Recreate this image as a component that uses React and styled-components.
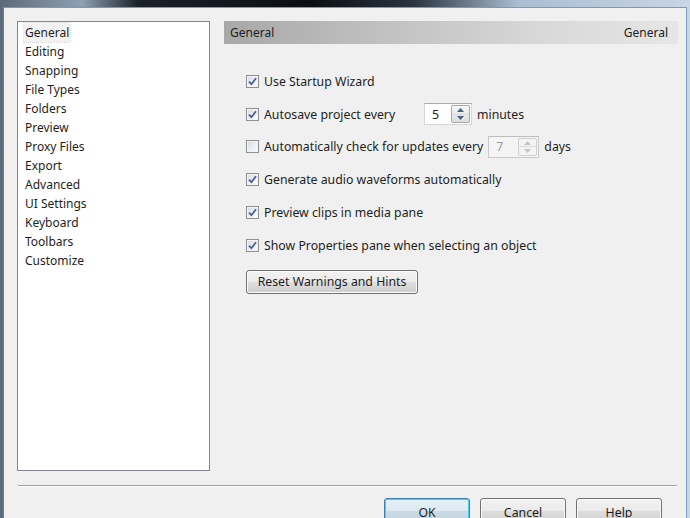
import React from "react";
import styled, { createGlobalStyle, css } from "styled-components";

const GlobalStyle = createGlobalStyle`
  html, body {
    margin: 0;
    padding: 0;
    width: 690px;
    height: 518px;
    overflow: hidden;
  }
  body {
    font-family: "Noto Sans", "Open Sans", sans-serif;
    font-size: 12px;
    color: #1e1e1e;
  }
`;

const Frame = styled.div`
  width: 690px;
  height: 518px;
  display: flex;
  flex-direction: column;
  background: linear-gradient(90deg, #5d6a78 0%, #8da0b4 12%, #1a2129 20%, #0b0f14 45%, #2a3440 60%, #a9bdd2 75%, #c8d6e6 100%);
  overflow: hidden;
`;

const Dialog = styled.div`
  flex: 1;
  margin: 7px 3px 0 3px;
  background: #f0f0f0;
  border-top: 1px solid #8a96a3;
  border-left: 1px solid #6f7d8b;
  border-right: 1px solid #7a9cc0;
  padding: 13px 8px 0 13px;
  display: flex;
  flex-direction: column;
`;

const Body = styled.div`
  display: grid;
  grid-template-columns: 193px 454px;
  column-gap: 14px;
  height: 450px;
`;

const CategoryList = styled.ul`
  margin: 0;
  padding: 1px 0 0 0;
  list-style: none;
  background: #fff;
  border: 1px solid #828790;
`;

const Category = styled.li`
  height: 19px;
  line-height: 19px;
  padding-left: 6px;
  span {
    display: inline-block;
    padding: 0 1px;
    ${(p) =>
      p.$selected &&
      css`
        background: #f2f2f2;
        outline: 1px dotted #d8d8d8;
      `}
  }
`;

const Panel = styled.div`
  display: flex;
  flex-direction: column;
`;

const Header = styled.div`
  height: 23px;
  display: flex;
  align-items: center;
  justify-content: space-between;
  padding: 0 10px 0 6px;
  background: linear-gradient(90deg, #a8a8a8 0%, #bdbdbd 30%, #d8d8d8 70%, #e6e6e6 100%);
  color: #222;
`;

const Options = styled.div`
  display: flex;
  flex-direction: column;
  padding: 21px 0 0 22px;
  font-size: 12.3px;
`;

const Row = styled.div`
  height: 32.8px;
  display: flex;
  align-items: center;
  gap: 5px;
`;

const Box = styled.span`
  width: 13px;
  height: 13px;
  box-sizing: border-box;
  flex: none;
  border: 1px solid #8e8f8f;
  background: linear-gradient(135deg, #d4dbe3 0%, #eef1f5 60%, #ffffff 100%);
  display: flex;
  align-items: center;
  justify-content: center;
  box-shadow: inset 0 0 0 1px #f4f4f4;
`;

const Label = styled.span`
  min-width: ${(p) => p.$min || 0}px;
  color: #1e1e1e;
  white-space: nowrap;
`;

const Spin = styled.div`
  display: flex;
  align-items: stretch;
  width: ${(p) => p.$w}px;
  height: 22px;
  box-sizing: border-box;
  border: 1px solid ${(p) => (p.$disabled ? "#c9c9c9" : "#d6d6d6")};
  border-top-color: ${(p) => (p.$disabled ? "#bdbdbd" : "#abadb3")};
  background: ${(p) => (p.$disabled ? "#f4f4f4" : "#fff")};
`;

const SpinValue = styled.span`
  flex: 1;
  display: flex;
  align-items: center;
  padding-left: 7px;
  color: ${(p) => (p.$disabled ? "#9a9a9a" : "#1e1e1e")};
`;

const SpinButtons = styled.div`
  width: 17px;
  display: flex;
  flex-direction: column;
  margin: 1px;
  border: 1px solid ${(p) => (p.$disabled ? "#cfcfcf" : "#a7a7a7")};
  border-radius: 2px;
  background: ${(p) => (p.$disabled ? "#f4f4f4" : "linear-gradient(#f6f6f6, #dcdcdc)")};
`;

const SpinHalf = styled.div`
  flex: 1;
  display: flex;
  align-items: center;
  justify-content: center;
  & + & {
    border-top: 1px solid ${(p) => (p.$disabled ? "#dadada" : "#b9b9b9")};
  }
`;

const ButtonBase = styled.button`
  font-family: inherit;
  font-size: 12.3px;
  color: #1e1e1e;
  height: 24px;
  box-sizing: border-box;
  border: 1px solid #707070;
  border-radius: 3px;
  padding: 0;
  background: linear-gradient(#f2f2f2 0%, #ebebeb 48%, #dddddd 52%, #cfcfcf 100%);
  box-shadow: inset 0 0 0 1px #fcfcfc;
`;

const ResetButton = styled(ButtonBase)`
  width: 172px;
  margin-top: 8px;
`;

const Separator = styled.div`
  margin: 14px 0 0 1px;
  height: 0;
  border-top: 1px solid #a0a0a0;
  border-bottom: 1px solid #ffffff;
  width: 659px;
`;

const Footer = styled.div`
  display: flex;
  justify-content: flex-end;
  gap: 10px;
  padding: 11px 16px 0 0;
`;

const DialogButton = styled(ButtonBase)`
  width: 86px;
  height: 26px;
  padding-top: 2px;
  ${(p) =>
    p.$default &&
    css`
      border-color: #3c7fb1;
      box-shadow: inset 0 0 0 1px #48d0f8;
      background: linear-gradient(#e5f1f8 0%, #dde9f0 48%, #cbdbe5 52%, #c2d3de 100%);
    `}
`;

const Arrow = ({ up, disabled }) => (
  <svg width="7" height="4" viewBox="0 0 7 4">
    <path d={up ? "M0 4 L3.5 0 L7 4 Z" : "M0 0 L3.5 4 L7 0 Z"} fill={disabled ? "#c4c4c4" : "#4d6185"} />
  </svg>
);

const Check = () => (
  <svg width="9" height="9" viewBox="0 0 9 9">
    <path d="M1 4.6 L3.4 7.2 L8 1.2" fill="none" stroke="#4a5f97" strokeWidth="1.8" />
  </svg>
);

const CheckBox = ({ checked }) => <Box>{checked && <Check />}</Box>;

const SpinBox = ({ value, width, disabled }) => (
  <Spin $w={width} $disabled={disabled}>
    <SpinValue $disabled={disabled}>{value}</SpinValue>
    <SpinButtons $disabled={disabled}>
      <SpinHalf $disabled={disabled}>
        <Arrow up disabled={disabled} />
      </SpinHalf>
      <SpinHalf $disabled={disabled}>
        <Arrow disabled={disabled} />
      </SpinHalf>
    </SpinButtons>
  </Spin>
);

const categories = [
  "General",
  "Editing",
  "Snapping",
  "File Types",
  "Folders",
  "Preview",
  "Proxy Files",
  "Export",
  "Advanced",
  "UI Settings",
  "Keyboard",
  "Toolbars",
  "Customize",
];

export default function App() {
  return (
    <>
      <GlobalStyle />
      <Frame>
        <Dialog>
          <Body>
            <CategoryList>
              {categories.map((c, i) => (
                <Category key={c} $selected={i === 0}>
                  <span>{c}</span>
                </Category>
              ))}
            </CategoryList>
            <Panel>
              <Header>
                <span>General</span>
                <span>General</span>
              </Header>
              <Options>
                <Row>
                  <CheckBox checked />
                  <Label>Use Startup Wizard</Label>
                </Row>
                <Row>
                  <CheckBox checked />
                  <Label $min={155}>Autosave project every</Label>
                  <SpinBox value="5" width={48} />
                  <Label>minutes</Label>
                </Row>
                <Row>
                  <CheckBox />
                  <Label>Automatically check for updates every</Label>
                  <SpinBox value="7" width={51} disabled />
                  <Label>days</Label>
                </Row>
                <Row>
                  <CheckBox checked />
                  <Label>Generate audio waveforms automatically</Label>
                </Row>
                <Row>
                  <CheckBox checked />
                  <Label>Preview clips in media pane</Label>
                </Row>
                <Row>
                  <CheckBox checked />
                  <Label>Show Properties pane when selecting an object</Label>
                </Row>
                <div>
                  <ResetButton>Reset Warnings and Hints</ResetButton>
                </div>
              </Options>
            </Panel>
          </Body>
          <Separator />
          <Footer>
            <DialogButton $default>OK</DialogButton>
            <DialogButton>Cancel</DialogButton>
            <DialogButton>Help</DialogButton>
          </Footer>
        </Dialog>
      </Frame>
    </>
  );
}
